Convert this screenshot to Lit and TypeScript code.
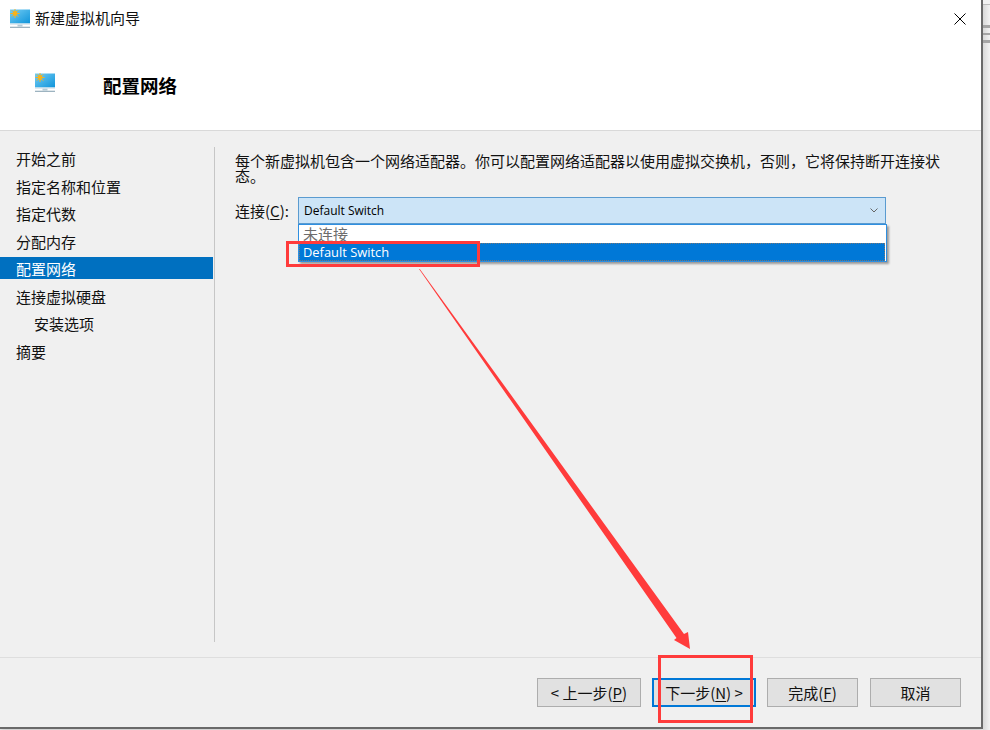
import { LitElement, html, css, svg, unsafeCSS } from "lit";
import { customElement } from "lit/decorators.js";

const FONT = unsafeCSS(`"Noto Sans CJK SC", "Liberation Sans", sans-serif`);

const monitor = (id: string) => html`<svg class="mon" width="20" height="20" viewBox="0 0 20 20">
  <defs><linearGradient id=${id} x1="0" y1="0" x2="1" y2="1"><stop offset="0" stop-color="#74cdf4"/><stop offset="1" stop-color="#0f94da"/></linearGradient></defs>
  <rect x="0" y="0.500" width="20" height="14" fill=${`url(#${id})`}/>
  <rect x="0" y="14.500" width="20" height="1.200" fill="#d4e2ea"/>
  <path d="M5 0V9M.5 4.500H9.500M1.800 1.300 8.200 7.700M8.200 1.300 1.800 7.700" stroke="#f4b323" stroke-width="1"/>
  <circle cx="5" cy="4.500" r="2.400" fill="#f7b21a"/>
  <rect x="7.500" y="15.700" width="5" height="1.800" fill="#b4cbd8"/>
  <rect x="0" y="17.700" width="20" height="1.300" fill="#9db3c0"/>
</svg>`;

@customElement("app-root")
export class AppRoot extends LitElement {
  static styles = css`
    :host { display: block; width: 990px; height: 730px; position: relative; overflow: hidden; background: #f4f4f4; font-family: ${FONT}; }
    .strip { position: absolute; left: 983px; top: 0; width: 7px; height: 730px; background: linear-gradient(90deg, #d8d8d8, #f2f2f2); }
    .strip .top { height: 4px; background: #f2f2f2; border-bottom: 1px solid #bdbdbd; }
    .strip .lines { margin-top: 20px; }
    .strip i { display: block; height: 2.500px; background: #a5a5a5; margin-bottom: 5px; }
    .window { box-sizing: border-box; width: 983px; height: 729px; background: #f0f0f0; border-right: 2px solid #6a6a6a; border-bottom: 2px solid #6a6a6a; box-shadow: 0 0 5px rgba(0,0,0,.3); display: flex; flex-direction: column; }
    .head { box-sizing: border-box; height: 131px; flex: none; background: #fff; border-bottom: 1px solid #d9d9d9; display: flex; flex-direction: column; }
    .title { display: flex; align-items: center; height: 37px; padding: 0 15px 0 10px; gap: 5px; font-size: 15px; color: #111; }
    .title span { flex: 1; margin-top: -2px; }
    .sub { display: flex; align-items: center; padding: 35px 0 0 35px; gap: 48px; font-size: 18.500px; font-weight: 700; color: #000; }
    .sub .mon { margin-bottom: 5px; }
    .body { flex: 1; display: flex; min-height: 0; }
    .side { box-sizing: border-box; width: 215px; margin: 16px 0 15px; border-right: 1px solid #c6c6c6; padding-right: 1px; font-size: 15px; color: #111; }
    .side div { height: 27.500px; line-height: 23px; padding-left: 16px; }
    .side div.on { background: #0070c0; color: #fff; height: 22px; line-height: 23px; margin-bottom: 5.500px; }
    .side div.in { padding-left: 34px; }
    .main { flex: 1; padding: 22px 20px 0 20px; font-size: 15px; color: #111; }
    .desc { width: 715px; line-height: 15px; }
    .row { display: flex; align-items: flex-start; margin-top: 14px; }
    .lbl { width: 63px; line-height: 27px; }
    .lbl u, .btn u { text-underline-offset: 2px; }
    .combo { width: 588px; position: relative; font-family: "Open Sans", ${FONT}; font-size: 12px; }
    .sel { box-sizing: border-box; height: 27px; background: #cce4f7; border: 1px solid #5a9bd0; padding-left: 5px; display: flex; align-items: center; justify-content: space-between; color: #000; }
    .sel svg { margin-right: 7px; }
    .list { position: absolute; top: 27px; left: 0; width: 589px; box-sizing: border-box; background: #fff; border: 1px solid #2f8fe0; box-shadow: 2px 2px 2px #9a9a9a; }
    .list div { height: 18px; line-height: 18px; padding-left: 4px; }
    .list .dis { color: #6d6d6d; font-size: 15px; font-family: ${FONT}; }
    .list .pick { background: #0078d7; color: #fff; font-size: 12.900px; outline: 1px dotted #777; outline-offset: -1px; margin-right: 1px; }
    .foot { box-sizing: border-box; height: 70px; flex: none; border-top: 1px solid #dedede; display: flex; justify-content: flex-end; padding: 20px 20px 0 0; }
    .btn { box-sizing: border-box; width: 104px; height: 29px; margin-left: 11px; background: #e1e1e1; border: 1px solid #adadad; font-size: 15px; color: #111; display: flex; align-items: center; justify-content: center; }
    .btn.pri { border: 2px solid #0078d7; }
    .btn.m { width: 91px; }
    .btn.n { width: 91px; margin-left: 12px; }
    .ann { position: absolute; left: 0; top: 0; pointer-events: none; }
  `;

  render() {
    const items = ["开始之前", "指定名称和位置", "指定代数", "分配内存", "配置网络", "连接虚拟硬盘", "安装选项", "摘要"];
    return html`
      <div class="window">
        <div class="head">
          <div class="title">${monitor("m1")}<span>新建虚拟机向导</span>
            <svg width="12" height="12" viewBox="0 0 12 12"><path d="M.5.5 11.500 11.500M11.500.5 .5 11.500" stroke="#000" stroke-width="1"/></svg>
          </div>
          <div class="sub">${monitor("m2")}<span>配置网络</span></div>
        </div>
        <div class="body">
          <div class="side">
            ${items.map((t, i) => html`<div class=${i === 4 ? "on" : i === 6 ? "in" : ""}>${t}</div>`)}
          </div>
          <div class="main">
            <div class="desc">每个新虚拟机包含一个网络适配器。你可以配置网络适配器以使用虚拟交换机，否则，它将保持断开连接状态。</div>
            <div class="row">
              <div class="lbl">连接(<u>C</u>):</div>
              <div class="combo">
                <div class="sel">Default Switch
                  <svg width="8" height="5" viewBox="0 0 8 5"><path d="M.5.5 4 4 7.500.5" fill="none" stroke="#666" stroke-width="1"/></svg>
                </div>
                <div class="list">
                  <div class="dis">未连接</div>
                  <div class="pick">Default Switch</div>
                </div>
              </div>
            </div>
          </div>
        </div>
        <div class="foot">
          <div class="btn">&lt; 上一步(<u>P</u>)</div>
          <div class="btn pri">下一步(<u>N</u>) &gt;</div>
          <div class="btn m">完成(<u>F</u>)</div>
          <div class="btn n">取消</div>
        </div>
      </div>
      <div class="strip"><div class="top"></div><div class="lines"><i></i><i></i><i></i></div></div>
      <svg class="ann" width="990" height="730" viewBox="0 0 990 730">
        ${svg`<rect x="287.500" y="242.500" width="191" height="23" fill="none" stroke="#ff3b3b" stroke-width="3"/>
        <rect x="659.500" y="656.500" width="92" height="65" fill="none" stroke="#ff3b3b" stroke-width="3"/>
        <polygon points="419,269 419.800,269 684,634 688,632 690,649 674,640 676.500,638" fill="#ff3b3b"/>`}
      </svg>
    `;
  }
}
